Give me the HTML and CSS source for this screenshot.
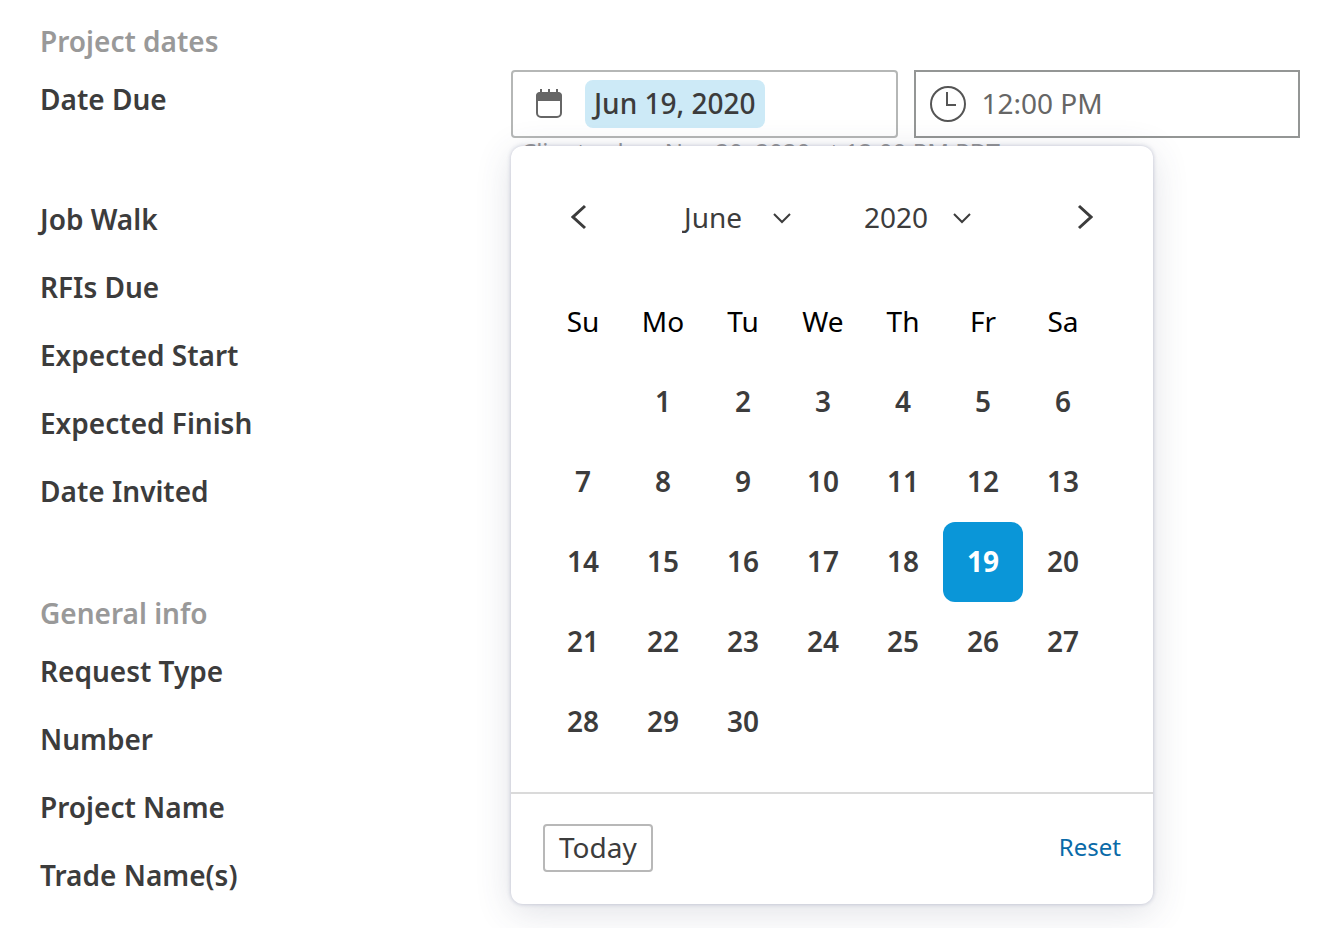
FILE: index.html
```html
<!DOCTYPE html>
<html lang="en">
<head>
    <meta charset="UTF-8">
    <meta name="viewport" content="width=device-width, initial-scale=1.0">
    <title>Project dates</title>
    <link rel="stylesheet" href="styles.css">
</head>
<body>

    <section class="section">
        <h2>Project dates</h2>
        <div class="row row-open">
            <label for="dateDue">Date Due</label>
            <div class="fields">
                <div class="field-group">
                    <div class="field">
                        <svg class="icon-calendar" width="28" height="30" viewBox="0 0 28 30">
                            <rect x="2" y="4" width="24" height="24" rx="4" fill="none" stroke="#666" stroke-width="2"/>
                            <path d="M1 12V7a4 4 0 0 1 4-4h18a4 4 0 0 1 4 4v5z" fill="#666"/>
                            <path d="M6 0v4M14 0v4M22 0v4" stroke="#666" stroke-width="2"/>
                        </svg>
                        <input type="text" id="dateDue" class="date-input" value="Jun 19, 2020">
                    </div>
                    <p class="hint">Client value: Nov 20, 2020 at 12:00 PM PDT</p>

                    <div class="datepicker">
                        <div class="picker-header">
                            <button class="arrow" aria-label="Previous month"><svg width="16" height="26" viewBox="0 0 16 26"><path d="M14 2L2 13l12 11"/></svg></button>
                            <div class="selects">
                                <div class="select-wrap">
                                    <select aria-label="Month"><option>June</option></select>
                                    <svg width="20" height="12" viewBox="0 0 20 12"><path d="M2 2l8 8 8-8"/></svg>
                                </div>
                                <div class="select-wrap">
                                    <select aria-label="Year"><option>2020</option></select>
                                    <svg width="20" height="12" viewBox="0 0 20 12"><path d="M2 2l8 8 8-8"/></svg>
                                </div>
                            </div>
                            <button class="arrow" aria-label="Next month"><svg width="16" height="26" viewBox="0 0 16 26"><path d="M2 2l12 11L2 24"/></svg></button>
                        </div>

                        <table class="calendar">
                            <thead>
                                <tr><th>Su</th><th>Mo</th><th>Tu</th><th>We</th><th>Th</th><th>Fr</th><th>Sa</th></tr>
                            </thead>
                            <tbody>
                                <tr><td></td><td><button>1</button></td><td><button>2</button></td><td><button>3</button></td><td><button>4</button></td><td><button>5</button></td><td><button>6</button></td></tr>
                                <tr><td><button>7</button></td><td><button>8</button></td><td><button>9</button></td><td><button>10</button></td><td><button>11</button></td><td><button>12</button></td><td><button>13</button></td></tr>
                                <tr><td><button>14</button></td><td><button>15</button></td><td><button>16</button></td><td><button>17</button></td><td><button>18</button></td><td><button class="selected">19</button></td><td><button>20</button></td></tr>
                                <tr><td><button>21</button></td><td><button>22</button></td><td><button>23</button></td><td><button>24</button></td><td><button>25</button></td><td><button>26</button></td><td><button>27</button></td></tr>
                                <tr><td><button>28</button></td><td><button>29</button></td><td><button>30</button></td><td></td><td></td><td></td><td></td></tr>
                            </tbody>
                        </table>

                        <div class="picker-footer">
                            <button class="today">Today</button>
                            <button class="reset">Reset</button>
                        </div>
                    </div>
                </div>

                <div class="field-group">
                    <div class="field field-time">
                        <svg class="icon-clock" width="36" height="36" viewBox="0 0 36 36">
                            <circle cx="18" cy="18" r="17"/>
                            <path d="M17 6v13h9"/>
                        </svg>
                        <input type="text" class="time-input" aria-label="Time due" value="12:00 PM">
                    </div>
                </div>
            </div>
        </div>
        <div class="row">Job Walk</div>
        <div class="row">RFIs Due</div>
        <div class="row">Expected Start</div>
        <div class="row">Expected Finish</div>
        <div class="row">Date Invited</div>
    </section>

    <section class="section">
        <h2>General info</h2>
        <div class="row">Request Type</div>
        <div class="row">Number</div>
        <div class="row">Project Name</div>
        <div class="row">Trade Name(s)</div>
    </section>

</body>
</html>
```

FILE: styles.css
```css
* {
  box-sizing: border-box;
}
body {
  margin: 0;
  min-height: 100vh;
  padding: 21px 28px 0 40px;
  background-color: #fff;
  color: #3c3c3c;
  font-family: "Noto Sans", sans-serif;
  font-size: 28px;
  line-height: 40px;
}
button, input, select {
  font: inherit;
  color: inherit;
  background: none;
  border: none;
  padding: 0 0 2px;
  margin: 0;
}
button, select {
  cursor: pointer;
}
.section {
  margin-bottom: 68px;
}
.section:last-child {
  margin-bottom: 0;
}
h2 {
  margin: 0 0 4px;
  font-size: 28px;
  font-weight: 600;
  color: #999;
}
.row {
  padding: 14px 0;
  font-weight: 600;
}
.row-open {
  display: grid;
  grid-template-columns: 471px minmax(0, 1fr);
  height: 120px;
  padding: 5px 0 0;
}
.row-open label {
  padding-top: 9px;
}
.fields {
  display: flex;
  gap: 16px;
  font-weight: 400;
}
.field-group {
  flex: 1;
  min-width: 0;
  position: relative;
}
.field {
  display: flex;
  align-items: center;
  height: 68px;
  padding-left: 22px;
  border: 2px solid #b5b7b6;
  border-radius: 4px;
}
.field-time {
  padding-left: 14px;
  border-color: #949695;
  border-radius: 0;
}
.field svg {
  flex: none;
}
.icon-clock {
  fill: none;
  stroke: #555;
  stroke-width: 2;
}
.date-input {
  width: 180px;
  height: 48px;
  margin-left: 22px;
  text-indent: 9px;
  font-weight: 500;
  background-color: #cdeaf7;
  border-radius: 8px;
}
.time-input {
  flex: 1;
  min-width: 0;
  margin-left: 16px;
  color: #666;
}
.hint {
  margin: 0;
  padding-left: 10px;
  font-size: 24px;
  line-height: 28px;
  white-space: nowrap;
  color: #999;
}

/* date picker */
.datepicker {
  position: absolute;
  top: 76px;
  left: 0;
  z-index: 1;
  width: 642px;
  background-color: #fff;
  border-radius: 12px;
  box-shadow: 0 0 4px rgba(60, 70, 120, 0.3), 0 8px 36px rgba(60, 70, 100, 0.16);
}
.picker-header {
  display: flex;
  align-items: center;
  justify-content: space-between;
  height: 136px;
  padding: 8px 60px 0;
}
.picker-header svg {
  display: block;
  fill: none;
  stroke: #3c3c3c;
  stroke-width: 2;
}
.picker-header .arrow svg {
  stroke-width: 3;
}
.selects {
  display: flex;
  gap: 60px;
}
.select-wrap {
  display: flex;
  align-items: center;
  gap: 24px;
  width: 120px;
}
select {
  appearance: none;
  width: 66px;
  text-indent: 2px;
}
.calendar {
  margin: 0 32px;
  border-collapse: collapse;
  table-layout: fixed;
  width: 560px;
}
.calendar th,
.calendar td {
  width: 80px;
  height: 80px;
  padding: 0;
  text-align: center;
}
.calendar th {
  padding-bottom: 2px;
  font-weight: 400;
  color: #000;
}
.calendar button {
  display: block;
  width: 80px;
  height: 80px;
  font-weight: 600;
  border-radius: 12px;
}
.calendar .selected {
  background-color: #0a96d8;
  color: #fff;
  font-weight: 700;
}
.picker-footer {
  display: flex;
  align-items: center;
  justify-content: space-between;
  margin-top: 30px;
  padding: 30px 32px 32px;
  border-top: 2px solid #dadada;
}
.today {
  height: 48px;
  padding: 0 14px 2px;
  line-height: 40px;
  border: 2px solid #b8b8b8;
  border-radius: 4px;
}
.reset {
  font-size: 24px;
  color: #0a6aa8;
}
```
